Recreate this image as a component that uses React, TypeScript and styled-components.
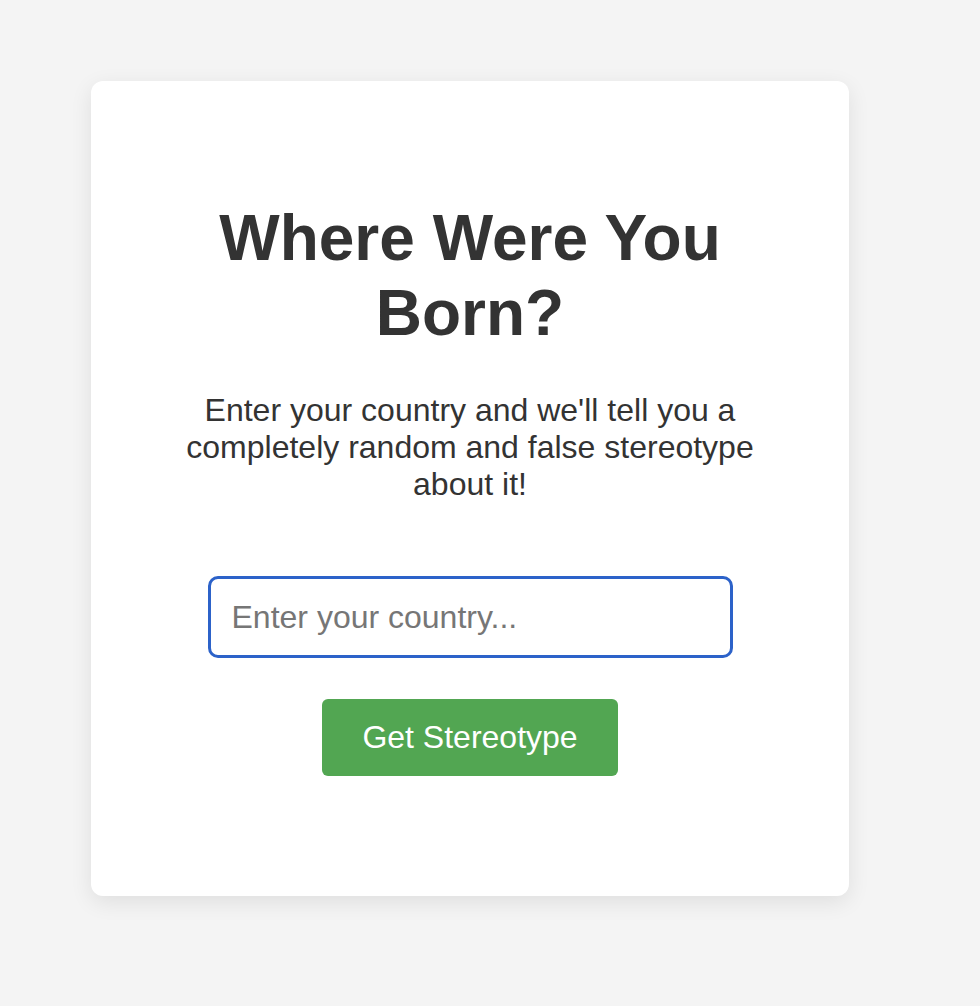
import React, { useState } from 'react';
import styled, { createGlobalStyle } from 'styled-components';

const GlobalStyle = createGlobalStyle`
    html, body {
        margin: 0;
        padding: 0;
        background: #f4f4f4;
        font-family: "Liberation Sans", Arial, Helvetica, sans-serif;
    }
`;

export default function App() {
    const [country, setCountry] = useState('');

    return (
        <>
            <GlobalStyle />
            <Page>
                <Card>
                    <Title>Where Were You Born?</Title>
                    <Intro>
                        Enter your country and we'll tell you a completely random and false stereotype about it!
                    </Intro>
                    <CountryInput
                        type="text"
                        value={country}
                        placeholder="Enter your country..."
                        onChange={(e) => setCountry(e.target.value)}
                    />
                    <SubmitButton type="button">Get Stereotype</SubmitButton>
                </Card>
            </Page>
        </>
    );
};

const Page = styled.div`
    min-height: 1006px;
    box-sizing: border-box;
    padding: 81px 0 0 91px;
`;

const Card = styled.div`
    width: 758px;
    box-sizing: border-box;
    padding: 120px 80px;
    background: #fff;
    border-radius: 12px;
    box-shadow: 0 6px 22px rgba(0, 0, 0, 0.09);
    display: flex;
    flex-direction: column;
    align-items: center;
    text-align: center;
`;

const Title = styled.h1`
    margin: 0;
    font-size: 64px;
    line-height: 75px;
    font-weight: 700;
    color: #333;
`;

const Intro = styled.p`
    margin: 41px 0 0;
    font-size: 32px;
    line-height: 37px;
    color: #333;
`;

const CountryInput = styled.input`
    margin-top: 73px;
    width: 525px;
    height: 82px;
    box-sizing: border-box;
    padding: 0 21px;
    border: 3px solid #2c62c9;
    border-radius: 10px;
    outline: none;
    font-family: inherit;
    font-size: 32px;
    color: #333;

    &::placeholder {
        color: #767676;
    }
`;

const SubmitButton = styled.button`
    margin-top: 41px;
    height: 77px;
    padding: 0 40px;
    border: none;
    border-radius: 6px;
    background: #52a652;
    color: #fff;
    font-family: inherit;
    font-size: 32px;
    cursor: pointer;
`;
